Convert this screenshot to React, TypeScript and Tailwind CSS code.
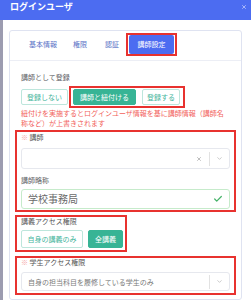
import { Check, ChevronDown, X } from "lucide-react";

const outlineBtn =
  "flex items-center justify-center rounded-[2px] border border-[#bde6dc] bg-white text-[#45b59c] text-[7px] leading-none";
const filledBtn =
  "flex items-center justify-center rounded-[2px] border border-[#37b495] bg-[#37b495] text-white text-[7px] leading-none";
const redBox = "border-2 border-[#e8322f]";

function SelectBox({ text, clearable, height }: { text?: string; clearable?: boolean; height: string }) {
  return (
    <div className={`flex items-center rounded-[3px] border border-[#e6e8ee] bg-white ${height}`}>
      <span className="flex-1 pl-[6px] text-[7px] leading-[10px] text-[#7a7a7a] whitespace-nowrap">
        {text}
      </span>
      {clearable && <X className="w-[6px] h-[6px] text-[#a8a8a8] mr-[7px]" strokeWidth={3} />}
      <div className="w-px h-[14px] bg-[#e2e2e2]" />
      <ChevronDown className="w-[7px] h-[7px] text-[#b8b8b8] mx-[6px]" strokeWidth={2.5} />
    </div>
  );
}

export default function App() {
  return (
    <div className="w-[251px] h-[300px] overflow-hidden bg-white flex flex-col font-['Noto_Sans_CJK_JP','Noto_Sans',sans-serif]">
      <div className="h-[20px] shrink-0 bg-[#4c6cf1] flex items-start justify-between pl-[10px] pr-[4px]">
        <span className="text-[9px] font-bold text-white leading-[13px]">ログインユーザ</span>
        <X className="w-[6px] h-[6px] mt-[4px] text-[#c6cefc]" strokeWidth={3} />
      </div>

      <div className="flex flex-1">
        <div className="w-[3px] bg-[#9c9cb0]" />
        <div className="flex-1 pt-[10px] pl-[6px] pr-[9px]">
          <div className="h-full rounded-[3px] border border-[#dfe3f1]">
            {/* tabs */}
            <div className="flex items-center pt-[2px] pb-[4px] pl-[19px] border-b border-[#eceef5]">
              <span className="text-[7px] leading-none text-[#5a72c6]">基本情報</span>
              <span className="ml-[16px] text-[7px] leading-none text-[#5a72c6]">権限</span>
              <span className="ml-[18px] text-[7px] leading-none text-[#5a72c6]">認証</span>
              <div className={`ml-[7px] ${redBox} px-px`}>
                <div className="w-[45px] h-[19px] rounded-[2px] bg-[#4c6cf1] flex items-center justify-center text-[7px] leading-none text-white">
                  講師設定
                </div>
              </div>
            </div>

            <div className="px-[5px]">
              <div className="pl-[6px] pt-[11px]">
                <p className="text-[7px] leading-[10px] text-[#606266]">講師として登録</p>
                <div className="flex items-center mt-[4px]">
                  <div className={`${outlineBtn} w-[47px] h-[16px]`}>登録しない</div>
                  <div className={`ml-px ${redBox} flex items-center gap-[6px] pl-[2px] pr-[3px] py-px`}>
                    <div className={`${filledBtn} w-[63px] h-[16px]`}>講師と紐付ける</div>
                    <div className={`${outlineBtn} w-[38px] h-[16px]`}>登録する</div>
                  </div>
                </div>
                <p className="w-[206px] text-[7px] leading-[10px] text-[#f25f5c]">
                  紐付けを実施するとログインユーザ情報を基に講師情報（講師名称など）が上書きされます
                </p>
              </div>

              {/* 講師 */}
              <div className={`mt-[2px] ${redBox} px-[4px] pb-px`}>
                <p className="text-[7px] leading-[10px] text-[#555]">
                  <span className="text-[#f5a3a3]">※</span> 講師
                </p>
                <div className="mt-[6px]">
                  <SelectBox clearable height="h-[21px]" />
                </div>
                <p className="mt-[6px] text-[7px] leading-[10px] text-[#606266]">講師略称</p>
                <div className="mt-[4px] h-[20px] flex items-center rounded-[3px] border border-[#c6ebcb] bg-white">
                  <span className="flex-1 pl-[6px] text-[10px] leading-[12px] text-[#6a6a6a]">学校事務局</span>
                  <Check className="w-[10px] h-[10px] mr-[6px] text-[#47b36a]" strokeWidth={3} />
                </div>
              </div>

              {/* 講義アクセス権限 */}
              <div className={`mt-[3px] w-fit ${redBox} pl-[4px] pr-[2px] pb-[2px]`}>
                <p className="text-[7px] leading-[9px] text-[#555]">講義アクセス権限</p>
                <div className="mt-[4px] flex items-center gap-[5px]">
                  <div className={`${outlineBtn} w-[62px] h-[18px]`}>自身の講義のみ</div>
                  <div className={`${filledBtn} w-[35px] h-[18px]`}>全講義</div>
                </div>
              </div>

              {/* 学生アクセス権限 */}
              <div className={`mt-[4px] ${redBox} px-[4px] pb-[2px]`}>
                <p className="text-[7px] leading-[9px] text-[#555]">
                  <span className="text-[#f5a3a3]">※</span> 学生アクセス権限
                </p>
                <div className="mt-[5px]">
                  <SelectBox text="自身の担当科目を履修している学生のみ" height="h-[19px]" />
                </div>
              </div>
            </div>
          </div>
        </div>
      </div>
    </div>
  );
}
